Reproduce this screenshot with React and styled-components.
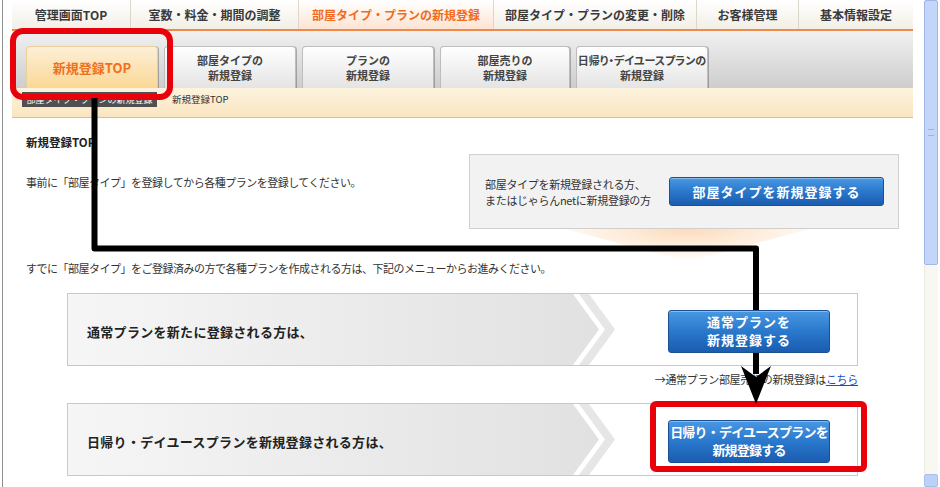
import React from 'react';
import styled, { createGlobalStyle } from 'styled-components';

const GlobalStyle = createGlobalStyle`
  html, body {
    margin: 0;
    padding: 0;
    background: #fff;
  }
  body {
    font-family: "Noto Sans CJK JP", "Noto Sans", sans-serif;
    color: #333;
  }
`;

const Screen = styled.div`
  position: relative;
  display: flex;
  width: 940px;
  height: 487px;
  overflow: hidden;
  background: #fff;
`;

const Frame = styled.div`
  flex: 1;
  margin-left: 2px;
  border-left: 1px solid #8e8e8e;
  padding: 0 9px 0 9px;
`;

const Nav = styled.nav`
  display: flex;
  height: 31px;
  box-sizing: border-box;
  background: linear-gradient(#ffffff, #f2efe6);
  border-bottom: 2px solid #f08a4b;
`;

const NavItem = styled.div`
  width: ${p => p.$w}px;
  box-sizing: border-box;
  display: flex;
  align-items: center;
  justify-content: center;
  font-size: 12px;
  font-weight: bold;
  white-space: nowrap;
  color: ${p => (p.$active ? '#f26b1d' : '#3a3a3a')};
  background: ${p => (p.$active ? 'linear-gradient(#ffffff, #fde4d3)' : 'transparent')};
  & + & {
    border-left: 1px solid #dcd7cb;
  }
`;

const TabArea = styled.div`
  display: flex;
  align-items: flex-end;
  gap: 6px;
  height: 57px;
  box-sizing: border-box;
  padding: 15px 0 0 14px;
  background: linear-gradient(#f1f1f1, #cdcdcd);
`;

const Tab = styled.div`
  width: ${p => p.$w || 132}px;
  height: 42px;
  box-sizing: border-box;
  display: flex;
  align-items: center;
  justify-content: center;
  text-align: center;
  border-radius: 4px 4px 0 0;
  border: 1px solid ${p => (p.$active ? '#e9cf9c' : '#bdbdbd')};
  border-bottom: none;
  box-shadow: 1px 0 0 rgba(0, 0, 0, 0.25);
  background: ${p =>
    p.$active ? 'linear-gradient(#fdefd6, #fbd796)' : 'linear-gradient(#ffffff, #e4e4e4)'};
  color: ${p => (p.$active ? '#f0701e' : '#444')};
  font-size: ${p => (p.$active ? 13 : 11)}px;
  line-height: 15px;
  font-weight: bold;
  white-space: nowrap;
  font-feature-settings: ${p => (p.$tight ? '"palt"' : 'normal')};
`;

const Breadcrumb = styled.div`
  display: flex;
  align-items: flex-start;
  gap: 15px;
  height: 30px;
  box-sizing: border-box;
  padding: 4px 0 0 10px;
  background: linear-gradient(#fdf3de, #fae5c0);
  border-bottom: 1px solid #c9c1ad;
`;

const CrumbParent = styled.span`
  display: block;
  width: 135px;
  height: 15px;
  box-sizing: border-box;
  background: #505050;
  color: #fff;
  font-size: 9px;
  line-height: 15px;
  text-align: center;
  white-space: nowrap;
  overflow: hidden;
`;

const CrumbCurrent = styled.span`
  font-size: 9.5px;
  line-height: 15px;
  color: #333;
`;

const Content = styled.main`
  padding: 16px 14px 0;
`;

const TopGrid = styled.div`
  display: grid;
  grid-template-columns: 1fr 430px;
`;

const Title = styled.h2`
  margin: 0;
  font-size: 11.5px;
  line-height: 16px;
  font-weight: bold;
  color: #222;
`;

const Lead = styled.p`
  margin: ${p => p.$top || 0}px 0 0;
  font-size: 11px;
  line-height: 16px;
  letter-spacing: -0.5px;
  color: #333;
  white-space: nowrap;
`;

const RegisterBox = styled.div`
  margin-top: 20px;
  height: 75px;
  box-sizing: border-box;
  display: flex;
  align-items: center;
  justify-content: space-between;
  padding: 0 14px 0 15px;
  border: 1px solid #cfcfcf;
  background: #f2f2f2;
`;

const BoxText = styled.p`
  margin: 0;
  font-size: 11px;
  line-height: 16px;
  letter-spacing: -0.3px;
  color: #333;
`;

const Glow = styled.div`
  width: 245px;
  height: 30px;
  margin-left: 96px;
  background: radial-gradient(ellipse 60% 110% at 50% 0%, rgba(251, 190, 130, 0.55), rgba(255, 255, 255, 0) 100%);
  clip-path: polygon(0 0, 100% 0, 54% 100%, 46% 100%);
`;

const BlueButton = styled.a`
  position: relative;
  z-index: 1;
  display: flex;
  align-items: center;
  justify-content: center;
  text-align: center;
  width: ${p => p.$w}px;
  height: ${p => p.$h}px;
  box-sizing: border-box;
  border: 1px solid #1d4f93;
  border-radius: 3px;
  background: linear-gradient(#4998e3, #2a78cc 50%, #1a5cb0);
  box-shadow: inset 0 1px 0 rgba(255, 255, 255, 0.35);
  color: #fff;
  font-size: 13px;
  line-height: 18px;
  font-weight: bold;
  letter-spacing: ${p => p.$ls || 0}px;
  white-space: nowrap;
  text-decoration: none;
`;

const PlanBox = styled.div`
  position: relative;
  margin: ${p => p.$top}px 41px 0;
  height: 73px;
  box-sizing: border-box;
  display: flex;
  align-items: center;
  justify-content: space-between;
  padding: 3px 27px 0 19px;
  border: 1px solid #c9c9c9;
  background: #fff;
`;

const ChevronBg = styled.svg`
  position: absolute;
  left: 0;
  top: 0;
  width: 100%;
  height: 100%;
`;

const PlanLabel = styled.span`
  position: relative;
  z-index: 1;
  font-size: 13px;
  font-weight: bold;
  letter-spacing: 0.3px;
  color: #222;
`;

const SubLink = styled.p`
  margin: 5px 41px 0;
  text-align: right;
  font-size: 11px;
  line-height: 16px;
  letter-spacing: -0.3px;
  color: #333;

  a {
    color: #1a4fc4;
    text-decoration: underline;
  }
`;

const Scrollbar = styled.div`
  display: flex;
  flex-direction: column;
  width: 14px;
  margin: 0 2px 0 2px;
`;

const Thumb = styled.div`
  height: 265px;
  box-sizing: border-box;
  border: 1px solid #9fb7e4;
  border-radius: 2px;
  background: #c3d5f8;
  display: flex;
  align-items: center;
  justify-content: center;

  &::after {
    content: "";
    width: 6px;
    height: 5px;
    border-top: 1px solid #9db3dd;
    border-bottom: 1px solid #9db3dd;
  }
`;

const Track = styled.div`
  flex: 1;
  background: #f8f7f1;
  border-left: 1px solid #eceae2;
`;

const ArrowButton = styled.div`
  height: 11px;
  background: #bdd0f5;
  border: 1px solid #a9bfe8;
  border-radius: 2px;
`;

const Overlay = styled.svg`
  position: absolute;
  left: 0;
  top: 0;
  pointer-events: none;
`;

function Chevron() {
  return (
    <ChevronBg viewBox="0 0 789 71" preserveAspectRatio="none">
      <defs>
        <linearGradient id="chev" x1="0" x2="1" y1="0" y2="0">
          <stop offset="0" stopColor="#f6f6f6" />
          <stop offset="1" stopColor="#e1e1e1" />
        </linearGradient>
      </defs>
      <polygon points="0,0 505,0 531,35.5 505,71 0,71" fill="url(#chev)" />
      <polygon points="511,0 521,0 547,35.5 521,71 511,71 537,35.5" fill="#e6e6e6" />
    </ChevronBg>
  );
}

const navItems = [
  { label: '管理画面TOP', w: 118 },
  { label: '室数・料金・期間の調整', w: 168 },
  { label: '部屋タイプ・プランの新規登録', w: 195, active: true },
  { label: '部屋タイプ・プランの変更・削除', w: 203 },
  { label: 'お客様管理', w: 102 },
  { label: '基本情報設定', w: 115 },
];

const tabs = [
  { lines: ['新規登録TOP'], active: true },
  { lines: ['部屋タイプの', '新規登録'] },
  { lines: ['プランの', '新規登録'] },
  { lines: ['部屋売りの', '新規登録'], w: 130 },
  { lines: ['日帰り・デイユースプランの', '新規登録'], tight: true },
];

export default function App() {
  return (
    <Screen>
      <GlobalStyle />
      <Frame>
        <Nav>
          {navItems.map(item => (
            <NavItem key={item.label} $w={item.w} $active={item.active}>
              {item.label}
            </NavItem>
          ))}
        </Nav>
        <TabArea>
          {tabs.map(tab => (
            <Tab key={tab.lines.join()} $active={tab.active} $w={tab.w} $tight={tab.tight}>
              <span>
                {tab.lines.map((l, i) => (
                  <React.Fragment key={l}>
                    {i > 0 && <br />}
                    {l}
                  </React.Fragment>
                ))}
              </span>
            </Tab>
          ))}
        </TabArea>
        <Breadcrumb>
          <CrumbParent>部屋タイプ・プランの新規登録</CrumbParent>
          <CrumbCurrent>新規登録TOP</CrumbCurrent>
        </Breadcrumb>

        <Content>
          <TopGrid>
            <div>
              <Title>新規登録TOP</Title>
              <Lead $top={24}>事前に「部屋タイプ」を登録してから各種プランを登録してください。</Lead>
            </div>
            <div>
              <RegisterBox>
                <BoxText>
                  部屋タイプを新規登録される方、
                  <br />
                  またはじゃらんnetに新規登録の方
                </BoxText>
                <BlueButton $w={215} $h={29} $ls={1}>部屋タイプを新規登録する</BlueButton>
              </RegisterBox>
              <Glow />
            </div>
          </TopGrid>

          <Lead $top={1}>
            すでに「部屋タイプ」をご登録済みの方で各種プランを作成される方は、下記のメニューからお進みください。
          </Lead>

          <PlanBox $top={17}>
            <Chevron />
            <PlanLabel>通常プランを新たに登録される方は、</PlanLabel>
            <BlueButton $w={162} $h={43} $ls={1}>
              通常プランを
              <br />
              新規登録する
            </BlueButton>
          </PlanBox>

          <SubLink>
            →通常プラン部屋売りの新規登録は<a href="#">こちら</a>
          </SubLink>

          <PlanBox $top={16}>
            <Chevron />
            <PlanLabel>日帰り・デイユースプランを新規登録される方は、</PlanLabel>
            <BlueButton $w={162} $h={43} $ls={-0.8}>
              日帰り・デイユースプランを
              <br />
              新規登録する
            </BlueButton>
          </PlanBox>
        </Content>
      </Frame>

      <Scrollbar>
        <Thumb />
        <Track />
        <ArrowButton />
      </Scrollbar>

      <Overlay width="940" height="487" viewBox="0 0 940 487">
        <rect x="13" y="31" width="157" height="66" rx="10" fill="none" stroke="#e8000b" strokeWidth="6" />
        <rect x="653" y="404" width="211" height="65" rx="3" fill="none" stroke="#e8000b" strokeWidth="6" />
        <path d="M94.5 98 V248.5 H756 V374" fill="none" stroke="#000" strokeWidth="6" strokeLinejoin="round" />
        <polygon points="741,366 756,377 771,366 756,404" fill="#000" />
      </Overlay>
    </Screen>
  );
}
